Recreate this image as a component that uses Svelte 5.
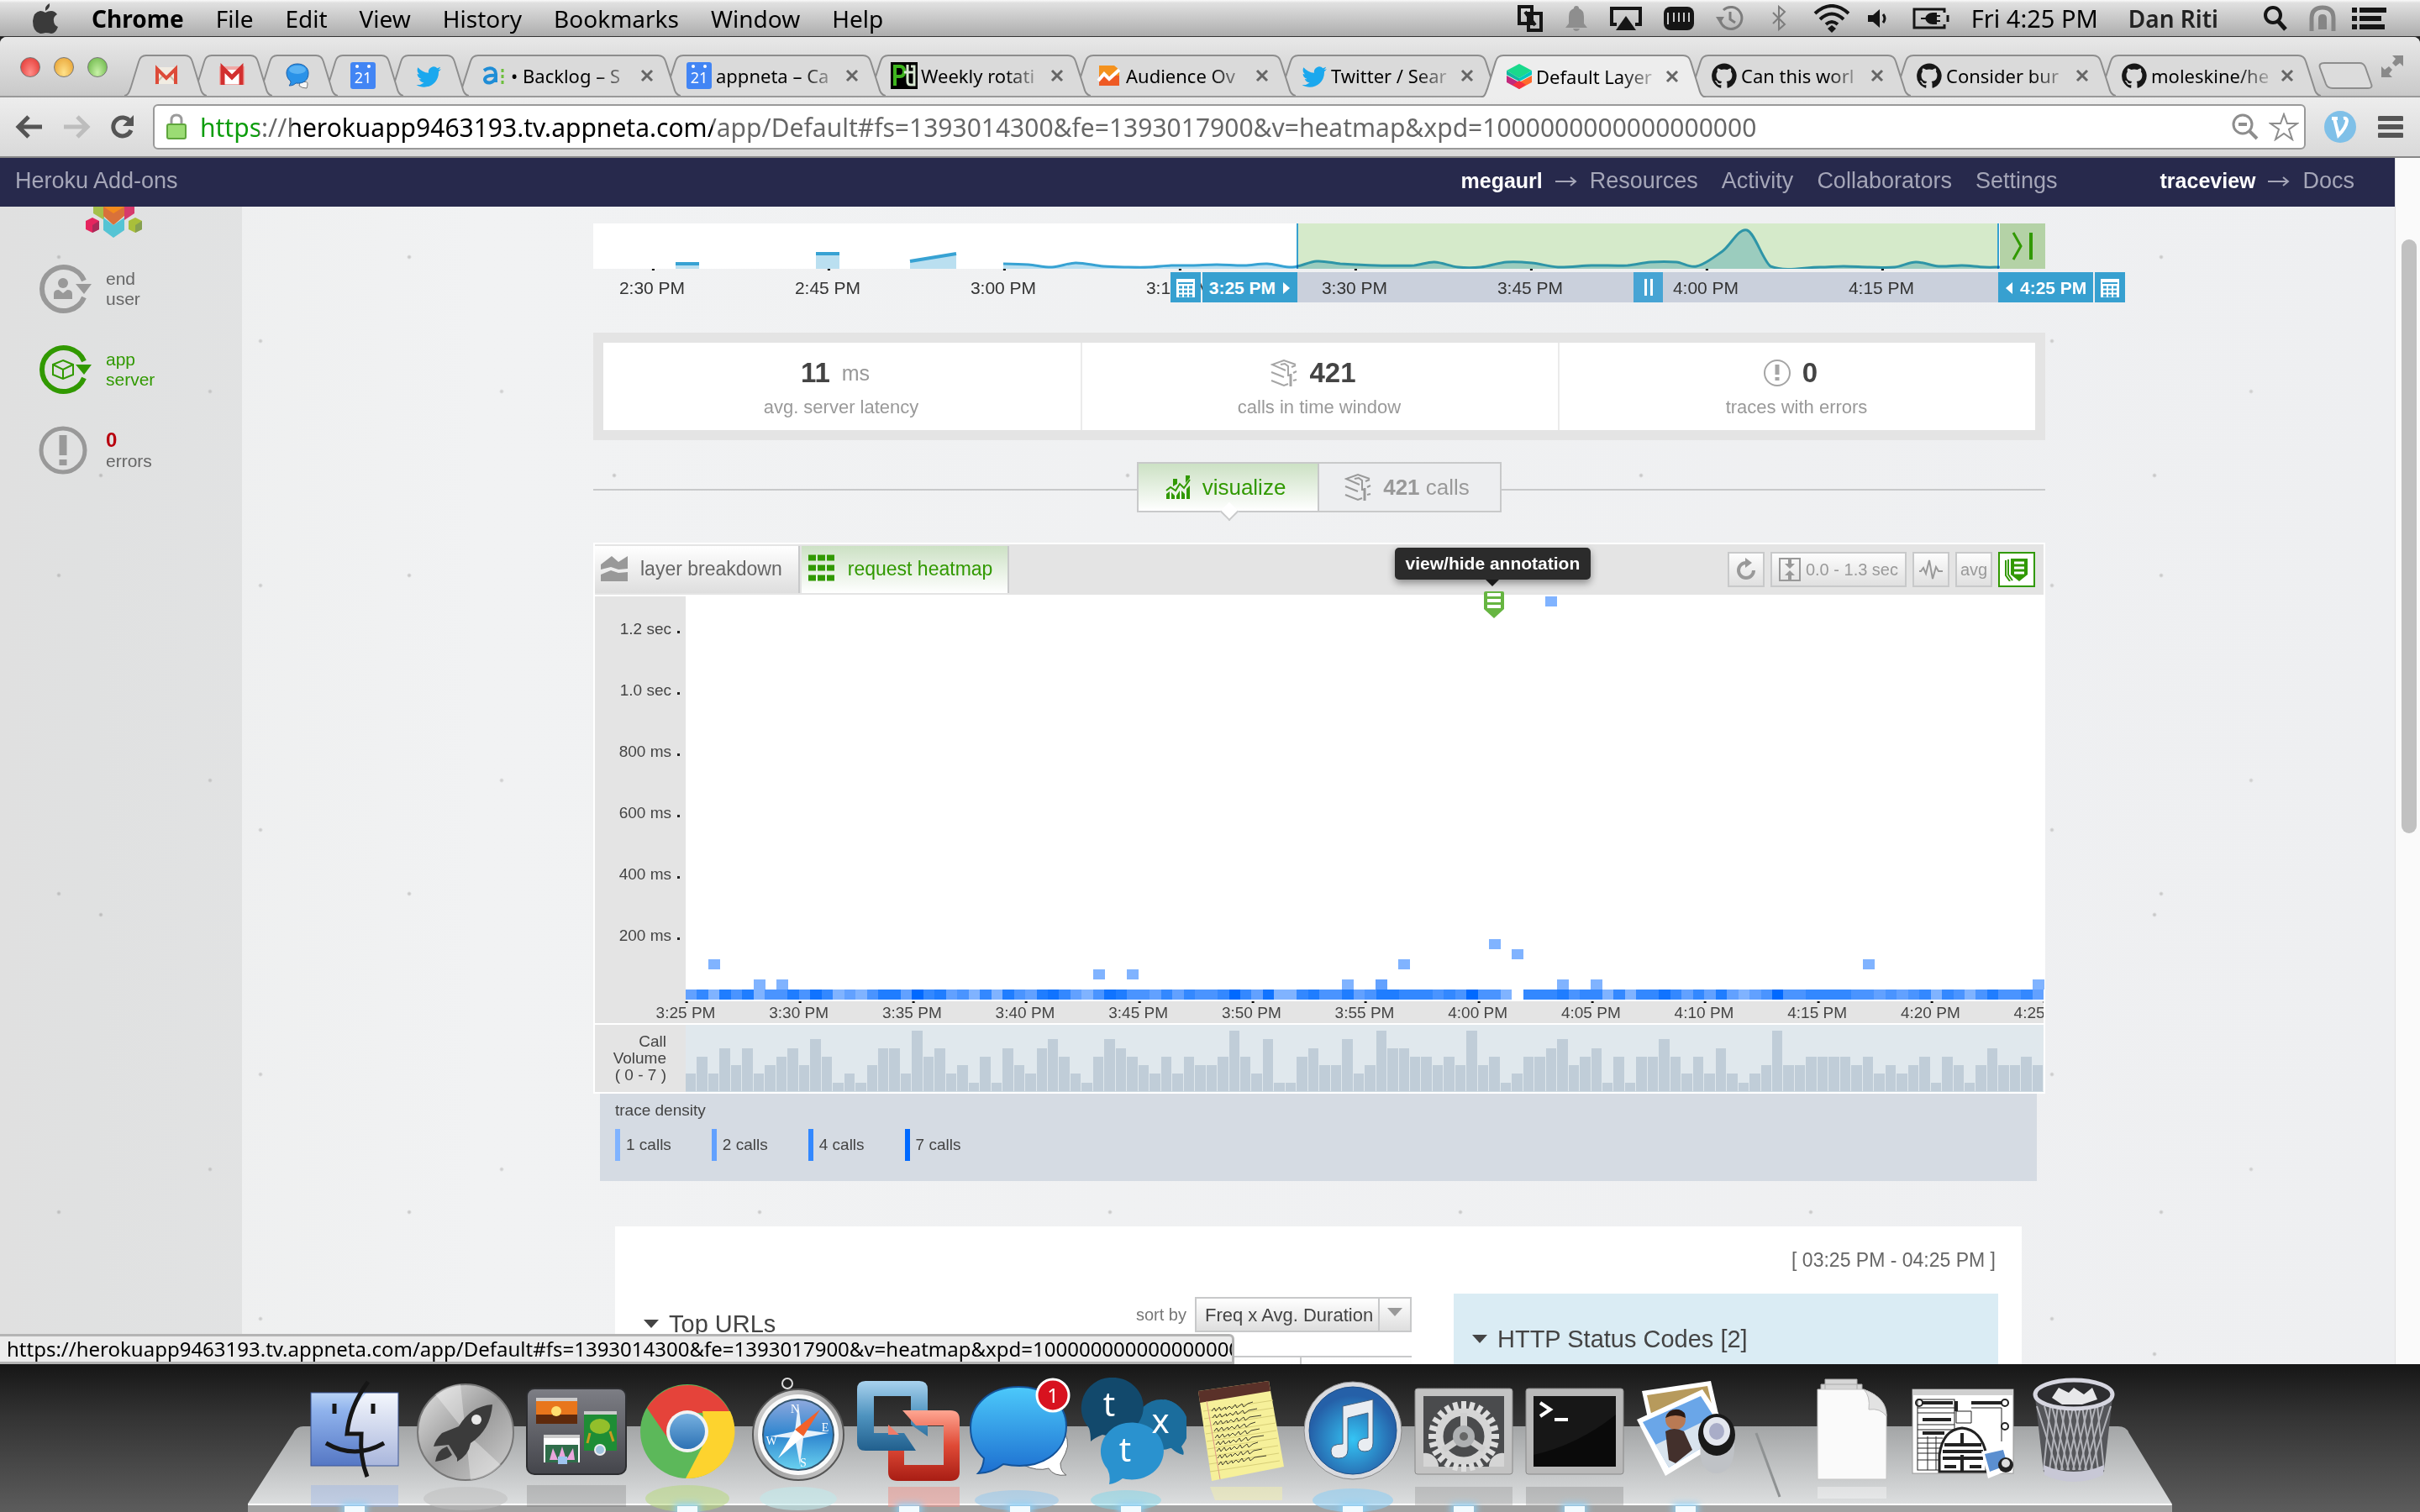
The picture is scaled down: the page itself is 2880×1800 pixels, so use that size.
<script>
  const menus = ['File', 'Edit', 'View', 'History', 'Bookmarks', 'Window', 'Help'];

  const miniTabs = ['gmail', 'inbox', 'chat', 'cal', 'twitter'];
  const tabs = [
    { icon: 'asana', title: '• Backlog – S' },
    { icon: 'cal', title: 'appneta – Ca' },
    { icon: 'pd', title: 'Weekly rotati' },
    { icon: 'analytics', title: 'Audience Ov' },
    { icon: 'twitter', title: 'Twitter / Sear' },
    { icon: 'layer', title: 'Default Layer', active: true },
    { icon: 'github', title: 'Can this worl' },
    { icon: 'github', title: 'Consider bur' },
    { icon: 'github', title: 'moleskine/he' }
  ];

  const url = 'https://herokuapp9463193.tv.appneta.com/app/Default#fs=1393014300&fe=1393017900&v=heatmap&xpd=1000000000000000000';

  // tick positions as a share of the overview chart's width
  const timeTicks = ['2:30 PM', '2:45 PM', '3:00 PM', '3:15 PM', '3:30 PM', '3:45 PM', '4:00 PM', '4:15 PM']
    .map((label, i) => ({ label, left: (70 + i * 209) / 17.28 }));

  const latency = [
    [488, 48], [518, 49], [546, 52], [574, 47], [607, 51], [637, 52], [661, 52], [688, 50], [712, 50], [742, 49],
    [775, 50], [802, 48], [832, 52], [861, 45], [889, 48], [931, 50], [977, 50], [1001, 46], [1029, 52], [1056, 52],
    [1087, 46], [1117, 47], [1148, 52], [1188, 50], [1231, 50], [1258, 46], [1289, 46], [1313, 51], [1344, 33],
    [1373, 8], [1401, 51], [1460, 52], [1488, 51], [1519, 52], [1549, 52], [1574, 46], [1601, 51], [1629, 50],
    [1656, 52], [1674, 52]
  ];
  function smooth(points) {
    let d = `M${points[0][0]} ${points[0][1]}`;
    for (let i = 1; i < points.length; i++) {
      const [x0, y0] = points[i - 1];
      const [x1, y1] = points[i];
      const before = points[i - 2] ?? points[i - 1];
      const after = points[i + 1] ?? points[i];
      const dx = (x1 - x0) / 3;
      const s0 = (y1 - before[1]) / 6;
      const s1 = (after[1] - y0) / 6;
      d += ` C${x0 + dx} ${y0 + s0} ${x1 - dx} ${y1 - s1} ${x1} ${y1}`;
    }
    return d;
  }
  const latencyLine = smooth(latency);

  // calls per 30 second bucket
  const counts = [
    2, 4, 2, 5, 3, 5, 2, 3, 4, 5, 3, 6, 4, 1, 2, 1, 3, 5, 5, 2, 7, 4, 5, 2, 3, 1, 4, 1, 5, 3,
    2, 5, 6, 4, 2, 1, 4, 6, 5, 4, 3, 2, 4, 2, 4, 3, 3, 4, 7, 4, 2, 6, 1, 1, 4, 5, 3, 3, 6, 2,
    3, 7, 5, 5, 4, 4, 3, 4, 3, 7, 3, 4, 1, 2, 4, 4, 5, 6, 3, 4, 5, 1, 4, 1, 4, 4, 6, 4, 2, 4,
    2, 5, 2, 1, 2, 3, 7, 3, 3, 4, 4, 4, 4, 3, 4, 2, 3, 2, 3, 4, 1, 4, 3, 1, 3, 5, 3, 3, 4, 3
  ];
  // calls that fell outside the lowest latency row
  const outliers = [
    { i: 2, row: 3 }, { i: 6, row: 1 }, { i: 8, row: 1 }, { i: 36, row: 2 }, { i: 39, row: 2 }, { i: 58, row: 1 },
    { i: 61, row: 1, n: 2 }, { i: 63, row: 3 }, { i: 71, row: 5 }, { i: 73, row: 4, n: 1, all: true },
    { i: 76, row: 39 }, { i: 77, row: 1 }, { i: 80, row: 1 }, { i: 104, row: 3 }, { i: 119, row: 1 }
  ];
  const shades = ['', '#80b3ff', '#62a1ff', '#4a94ff', '#3388ff', '#1f7dff', '#1073ff', '#0069ff'];
  const band = counts.map((n, i) => {
    const out = outliers.find((o) => o.i === i);
    if (!out) return n;
    return out.all ? 0 : Math.max(1, n - (out.n ?? 1));
  });

  const latencyTicks = ['1.2 sec', '1.0 sec', '800 ms', '600 ms', '400 ms', '200 ms'];
  const hourTicks = ['3:25', '3:30', '3:35', '3:40', '3:45', '3:50', '3:55', '4:00', '4:05', '4:10', '4:15', '4:20', '4:25'];
  const legend = [1, 2, 4, 7];

  const dockApps = [
    { id: 'finder', on: true }, { id: 'launchpad' }, { id: 'mission' }, { id: 'chrome', on: true }, { id: 'safari' },
    { id: 'vmware', on: true }, { id: 'messages', on: true }, { id: 'textual', on: true }, { id: 'notes' },
    { id: 'itunes', on: true }, { id: 'prefs', on: true }, { id: 'terminal', on: true }, { id: 'preview', on: true },
    { id: 'sep' }, { id: 'docs' }, { id: 'window' }, { id: 'trash' }
  ];
  const teeth = Array.from({ length: 24 }, (_, i) => i * 15);
  const lines = Array.from({ length: 9 }, (_, i) => i);
</script>

{#snippet fav(name)}
  <svg class="fav" viewBox="0 0 32 32" aria-hidden="true">
    {#if name === 'gmail'}
      <rect x="3" y="6" width="26" height="20" fill="#f1ece2" />
      <path d="M3 26L13 15M29 26L19 15" stroke="#c9c0ad" stroke-width="2" />
      <path d="M5 26V8L16 19L27 8V26" fill="none" stroke="#dd4b39" stroke-width="4" />
    {:else if name === 'inbox'}
      <rect x="1" y="5" width="30" height="22" fill="#f0a9a6" />
      <rect x="7" y="9" width="18" height="17" fill="#fff" />
      <path d="M5 27V7L16 18L27 7V27" fill="none" stroke="#d2302f" stroke-width="5" />
    {:else if name === 'chat'}
      <path d="M19 24q10-2 9 2q0 2-1 5q-6 0-9-3z" fill="#f6f6f6" stroke="#777" />
      <path d="M16 2C8 2 3 7 3 13c0 5 3 8 5 10c0 2-1 4-2 5c4 0 6-1 8-3c10 1 15-4 15-12C29 7 24 2 16 2z" fill="#2a92e8" stroke="#1c5fa8" />
      <ellipse cx="16" cy="9" rx="10" ry="5" fill="#7cc8fa" opacity=".6" />
    {:else if name === 'cal'}
      <rect x="1" y="0" width="30" height="32" rx="3" fill="#4285f4" />
      <circle cx="9" cy="5" r="2" fill="#fff" /><circle cx="23" cy="5" r="2" fill="#fff" />
      <text x="16" y="25" text-anchor="middle" font-size="18" fill="#fff" font-family="Noto Sans, sans-serif">21</text>
    {:else if name === 'twitter'}
      <path d="M31 8c-1 .6-2 .9-3.400 1c1.200-.8 2-2 2.500-3.200c-1.200.7-2.400 1.100-3.700 1.400A6.200 6.200 0 0 0 16 12.800C11 12.500 6.500 10 3.400 6.300c-1.600 3-.7 6.300 1.900 8.200c-1 0-2-.3-2.700-.7c0 3 2 5.500 4.900 6.200c-.9.200-1.800.3-2.700.1c.8 2.500 3 4.200 5.700 4.300A12.500 12.500 0 0 1 1.500 27C13 34 28.500 26.500 28 11.200C29.200 10.300 30.200 9.200 31 8z" fill="#1ba8ee" />
    {:else if name === 'asana'}
      <path d="M4 10q7-5 12-1q2 2 2 5v10M18 16q-13-1-13 5q1 4 6 3.500q5-1 7-6" fill="none" stroke="#1f8dd6" stroke-width="4" />
      <path d="M26 8v4M26 15v4M26 22v4" stroke="#6cbf3c" stroke-width="3" />
    {:else if name === 'pd'}
      <rect width="32" height="32" fill="#000" />
      <path d="M5 28V5h6q5 0 5 6t-5 6H7" fill="none" stroke="#3fb51f" stroke-width="4" />
      <path d="M20 3v20q0 4 4 4h4V5h-4M16 12h12" fill="none" stroke="#d8e8d2" stroke-width="3" />
    {:else if name === 'analytics'}
      <path d="M4 4h18l6 5v19H4z" fill="#f4921e" /><path d="M4 16h24v12H4z" fill="#ee5a24" />
      <path d="M3 22L10 14L16 20L28 9" fill="none" stroke="#fff" stroke-width="4" />
    {:else if name === 'layer'}
      <path d="M16 1L31 9L16 18L1 9z" fill="#19d98c" /><path d="M1 9L16 18V22L1 14z" fill="#10b8a0" /><path d="M31 9L16 18V22L31 14z" fill="#00c8c0" />
      <path d="M1 15L16 23V31L1 23z" fill="#c22a7c" /><path d="M31 15L16 23V31L31 23z" fill="#ff6a2b" /><path d="M16 21L24 26L16 31L8 26z" fill="#f5313f" />
    {:else if name === 'github'}
      <path d="M16 1.500A15 15 0 0 0 11.300 30.700c.8.100 1-.3 1-.7v-3c-4 .9-5-1.800-5-1.800c-.7-1.700-1.700-2.200-1.700-2.200c-1.300-.9.100-.9.100-.9c1.500.1 2.300 1.600 2.300 1.600c1.300 2.300 3.500 1.600 4.300 1.200c.1-1 .5-1.600 1-2C9.900 22.500 6.500 21.300 6.500 15.500c0-1.600.6-3 1.500-4c-.2-.4-.7-2 .1-4c0 0 1.300-.4 4.100 1.500a14 14 0 0 1 7.500 0c2.800-1.900 4.100-1.500 4.100-1.500c.8 2 .3 3.600.1 4c1 1 1.500 2.400 1.500 4c0 5.800-3.500 7-6.900 7.400c.6.500 1 1.400 1 2.800V30c0 .4.300.9 1 .7A15 15 0 0 0 16 1.500z" fill="#171717" />
    {/if}
  </svg>
{/snippet}

{#snippet callsIcon()}
  <svg class="calls-icon" viewBox="0 0 32 34" aria-hidden="true">
    <g fill="none" stroke="currentColor" stroke-width="2">
      <path d="M30 7L16 2L2 7L18 14M12 7L17 6L21 9V20H25M30 8L25 10" />
      <path d="M1 16L16 22M1 26L16 32L21 30" />
      <path d="M24 18V33" stroke-width="3" />
      <path d="M27 17L31 15M27 26L31 25" />
    </g>
  </svg>
{/snippet}

{#snippet calendarIcon()}
  <svg width="24" height="24" viewBox="0 0 24 24" aria-hidden="true">
    <rect x="1" y="1" width="22" height="22" fill="#fff" />
    <path d="M3 6h18" stroke="#37a0d0" stroke-width="2" />
    <path d="M4 11h16M4 16h16M4 21h16" stroke="#37a0d0" stroke-width="3" stroke-dasharray="4 2" />
  </svg>
{/snippet}

{#snippet dockIcon(id)}
  <svg viewBox="0 0 132 160" aria-hidden="true">
    {#if id === 'finder'}
      <rect x="14" y="18" width="104" height="87" fill="url(#finderL)" />
      <path d="M80 18h38v87H76Q73 88 74 70H56Q58 40 80 18z" fill="url(#finderR)" />
      <rect x="14" y="18" width="104" height="87" fill="none" stroke="#3d5796" />
      <path d="M82 5Q60 35 57 67H74Q72 95 81 118M32 78Q66 98 101 78" fill="none" stroke="#161616" stroke-width="5" />
      <path d="M42 31v12M88 31v12" stroke="#161616" stroke-width="5" />
      <rect x="14" y="128" width="104" height="26" fill="#8fb0ea" opacity=".35" />
    {:else if id === 'launchpad'}
      <circle cx="66" cy="65" r="57" fill="url(#steel)" stroke="#777" stroke-width="2" />
      <path d="M66 65L30 20A57 57 0 0 1 60 8zM66 65L108 104A57 57 0 0 1 72 122z" fill="#fff" opacity=".35" />
      <path d="M98 32Q72 34 58 58L38 66Q30 74 28 82L46 80L56 96L56 100Q70 92 72 78Q96 62 98 32z" fill="#3b3b3b" />
      <path d="M44 82Q32 86 30 100Q44 98 50 92z" fill="#3b3b3b" /><circle cx="79" cy="50" r="6" fill="#e8e8e8" />
      <ellipse cx="66" cy="144" rx="50" ry="14" fill="#bbb" opacity=".5" />
    {:else if id === 'mission'}
      <rect x="7" y="13" width="118" height="102" rx="9" fill="url(#slate)" stroke="#2c2d30" stroke-width="2" />
      <rect x="18" y="24" width="49" height="31" fill="#e8761c" /><rect x="18" y="24" width="49" height="4" fill="#ccc" /><path d="M18 44h49v11H18z" fill="#5f2a0c" /><circle cx="42" cy="40" r="6" fill="#ffdf70" />
      <rect x="75" y="40" width="39" height="47" fill="#1e8d35" /><rect x="75" y="40" width="39" height="4" fill="#ccc" /><ellipse cx="94" cy="58" rx="12" ry="9" fill="#93bf2b" /><path d="M82 66L79 78M106 64L110 76" stroke="#c79b22" stroke-width="3" />
      <rect x="27" y="68" width="43" height="33" fill="#fff" /><rect x="27" y="68" width="43" height="4" fill="#ccc" /><rect x="29" y="80" width="39" height="21" fill="#2f6d4a" /><path d="M34 98L38 84L44 98L49 82L54 98L62 84L64 98z" fill="#e9a7dc" />
      <circle cx="94" cy="86" r="6" fill="#9fc4df" stroke="#eee" stroke-width="2" /><rect x="44" y="94" width="11" height="9" fill="#9fc4ef" />
      <rect x="7" y="128" width="118" height="26" fill="#777" opacity=".3" />
    {:else if id === 'chrome'}
      <circle cx="66" cy="64" r="56" fill="#5cb85a" />
      <path d="M18 36A56 56 0 0 1 117 42H66L44 74z" fill="#e5433a" />
      <path d="M117 40A56 56 0 0 1 64 120L88 74L84 40z" fill="#fdd32e" />
      <circle cx="66" cy="64" r="25" fill="#f3f3f3" /><circle cx="66" cy="64" r="21" fill="url(#blueBall)" />
      <ellipse cx="66" cy="144" rx="50" ry="16" fill="#b7d77d" opacity=".55" />
    {:else if id === 'safari'}
      <circle cx="53" cy="7" r="6" fill="none" stroke="#ddd" stroke-width="2" />
      <circle cx="66" cy="68" r="54" fill="url(#steel)" stroke="#555" stroke-width="2" /><circle cx="66" cy="68" r="48" fill="#fafafa" /><circle cx="66" cy="68" r="42" fill="url(#ocean)" stroke="#35566f" stroke-width="2" />
      <path d="M66 32L70 62L102 66L72 72L68 104L62 72L32 70L62 64z" fill="#e6f1fb" />
      <path d="M92 38L72 70L62 62z" fill="#f2612a" /><path d="M42 96L62 62L72 70z" fill="#fff" />
      <g font-family="Liberation Serif, serif" font-size="14" fill="#fff" text-anchor="middle"><text x="62" y="42">N</text><text x="72" y="106">S</text><text x="98" y="64">E</text><text x="34" y="80">W</text></g>
      <ellipse cx="66" cy="144" rx="46" ry="14" fill="#bfe8ea" opacity=".6" />
    {:else if id === 'vmware'}
      <path d="M14 4H78Q88 4 88 14V70L68 56V22H24V66H60L74 87H14Q4 87 4 77V14Q4 4 14 4z" fill="url(#vmBlue)" />
      <path d="M58 39H115Q126 39 126 50V112Q126 123 115 123H52Q41 123 41 112V87H60V104H107V57H74z" fill="url(#vmRed)" /><path d="M41 68V56L54 68z" fill="#f07c69" />
      <rect x="41" y="130" width="85" height="24" fill="#e98e86" opacity=".5" />
    {:else if id === 'messages'}
      <path d="M112 56Q128 74 120 90Q116 98 114 102Q114 112 121 116Q106 118 100 108Q86 112 70 104z" fill="#fff" stroke="#666" />
      <path d="M64 11C30 11 7 32 7 60C7 76 14 88 23 96Q22 108 16 114Q32 114 46 103C92 112 121 88 121 58C121 32 98 11 64 11z" fill="url(#msg)" stroke="#13539a" stroke-width="2" />
      <circle cx="105" cy="21" r="19" fill="#d8121f" stroke="#fff" stroke-width="3" />
      <text x="105" y="30" text-anchor="middle" font-size="24" fill="#fff" font-family="Noto Sans, sans-serif">1</text>
      <ellipse cx="62" cy="146" rx="50" ry="12" fill="#8fc5ee" opacity=".5" />
    {:else if id === 'textual'}
      <path d="M106 26a34 34 0 0 1 20 56q4 8 2 10q-8-2-14-8A34 34 0 0 1 106 26z" fill="#1b6d9d" /><circle cx="102" cy="56" r="30" fill="#1b6d9d" />
      <path d="M40 0a37 35 0 1 1-8 68q-10 4-14 8q0-10-2-16A36 36 0 0 1 40 0z" fill="#12496c" />
      <path d="M60 54a38 34 0 1 1-4 66q-8 6-16 7q2-10-2-18A36 34 0 0 1 60 54z" fill="#2a92cf" />
      <g fill="#fff" font-family="Noto Sans, sans-serif" font-size="40" text-anchor="middle"><text x="40" y="46">t</text><text x="101" y="66">x</text><text x="59" y="100">t</text></g>
      <ellipse cx="60" cy="146" rx="42" ry="12" fill="#7fd6ea" opacity=".5" />
    {:else if id === 'notes'}
      <path d="M14 16L98 4L116 106L30 123z" fill="#f6f09a" /><path d="M14 16L98 4L100 16L16 30z" fill="#5a3129" />
      <g stroke="#d8cf78" fill="none">
        {#each lines as n}
          <path d={`M${20 + n} ${40 + n * 9}L${103 + n} ${27 + n * 9}`} />
        {/each}
      </g>
      <g stroke="#3f3d2c" fill="none">
        {#each lines as n}
          <path d={`M${30 + n} ${40 + n * 8}l3-4l2 4l4-5l2 4l5-4l1 3l4-4l3 3l4-5l2 4l6-5l2 4l5-4l${6 + (n % 3) * 4}-2`} />
        {/each}
      </g>
      <path d="M24 28L40 121" stroke="#e09a86" /><path d="M28 130h86v16H34z" fill="#f3efae" opacity=".5" />
    {:else if id === 'itunes'}
      <circle cx="66" cy="63" r="58" fill="#d9dade" stroke="#888" /><circle cx="66" cy="63" r="52" fill="url(#tunes)" stroke="#1d4e86" />
      <path d="M54 34L90 26V78Q90 88 80 88Q72 88 72 80Q72 72 84 72V42L60 48V86Q60 96 49 96Q40 96 40 87Q40 79 54 79z" fill="#e9edf2" stroke="#47637f" />
      <ellipse cx="66" cy="146" rx="48" ry="14" fill="#8fcdf2" opacity=".6" />
    {:else if id === 'prefs'}
      <rect x="8" y="13" width="116" height="102" rx="3" fill="#c3c3c3" stroke="#888" /><rect x="18" y="22" width="96" height="84" fill="#4a4b4d" />
      {#each teeth as a}
        <rect x="63" y="28" width="6" height="12" fill="#dedede" transform={`rotate(${a} 66 70)`} />
      {/each}
      <circle cx="66" cy="70" r="29" fill="none" stroke="#d5d5d5" stroke-width="9" /><path d="M66 70V42M66 70L42 86M66 70L90 86" stroke="#cfcfcf" stroke-width="8" /><circle cx="66" cy="70" r="13" fill="#aeb0b2" /><circle cx="66" cy="70" r="5" fill="#666" />
      <path d="M18 90a16 16 0 0 1 18 16H18zM114 90a16 16 0 0 0-18 16H114z" fill="#d5d5d5" /><rect x="8" y="130" width="116" height="22" fill="#888" opacity=".3" />
    {:else if id === 'terminal'}
      <rect x="8" y="13" width="116" height="102" rx="3" fill="#b9b9b9" stroke="#888" /><rect x="17" y="22" width="98" height="84" fill="#171717" /><path d="M17 92Q70 80 115 44V106H17z" fill="#050505" opacity=".7" />
      <path d="M25 30L37 38L25 46M42 50h16" fill="none" stroke="#fff" stroke-width="4" /><rect x="8" y="130" width="116" height="22" fill="#777" opacity=".3" />
    {:else if id === 'preview'}
      <path d="M14 16L96 4L112 74L30 90z" fill="#fff" /><path d="M20 21L92 10L106 70L34 82z" fill="#b79a5c" />
      <path d="M8 50L86 14L122 68L42 117z" fill="#fff" /><path d="M15 53L84 22L113 67L46 107z" fill="#6aa6e8" /><path d="M30 80L100 46L113 67L46 107z" fill="#d9e4ee" />
      <circle cx="54" cy="50" r="12" fill="#b97a54" /><path d="M42 48q4-12 16-10q8 2 8 10q-12-6-24 0z" fill="#2a1a14" /><path d="M42 64q10-6 22 0l10 22l-20 16l-8-4z" fill="#43302c" />
      <path d="M84 76Q80 114 104 114Q126 112 124 74z" fill="#bfc2c6" /><ellipse cx="103" cy="68" rx="22" ry="25" fill="#191919" /><ellipse cx="103" cy="64" rx="16" ry="17" fill="#e3e6ee" /><ellipse cx="103" cy="64" rx="9" ry="10" fill="#a9adc8" />
    {:else if id === 'docs'}
      <path d="M34 2H72V20H34zM29 8H78V24H29z" fill="#d6d6d6" stroke="#aaa" /><path d="M25 14H80Q104 22 107 44V121H25z" fill="#fafafa" stroke="#c4c4c4" /><path d="M80 14Q88 22 86 38Q100 36 107 46Q108 24 80 14z" fill="#e2e2e2" stroke="#bbb" />
      <path d="M25 130h82v14H25z" fill="#fff" opacity=".35" />
    {:else if id === 'window'}
      <rect x="6" y="14" width="120" height="100" fill="#fff" stroke="#999" /><rect x="6" y="14" width="120" height="7" fill="#cfcfcf" />
      <path d="M18 30h36M76 30h36M18 50h34M18 66h26M58 28v12" stroke="#222" stroke-width="4" />
      <g fill="none" stroke="#222"><rect x="12" y="26" width="44" height="84" /><path d="M12 36h44M12 42h44M12 56h44M12 62h44M12 72h30M12 78h30M12 84h30M12 90h30M12 98h30M24 70v40M34 70v40M76 36h36v40M58 40h18v14H58z" /></g>
      <path d="M38 112V92Q42 62 65 60Q88 62 94 92V112z" fill="#fff" stroke="#222" stroke-width="3" /><path d="M44 80h44M42 88h48M42 96h48M44 106h14M74 106h14M65 66v12M65 92v20" stroke="#222" stroke-width="4" />
      <circle cx="14" cy="30" r="4" fill="none" stroke="#222" stroke-width="2" /><circle cx="116" cy="30" r="4" fill="none" stroke="#222" stroke-width="2" /><circle cx="116" cy="58" r="4" fill="none" stroke="#222" stroke-width="2" />
      <path d="M88 88L118 82L126 108L96 120z" fill="#fff" /><path d="M92 91L114 86L119 104L98 112z" fill="#5b8fd0" /><circle cx="117" cy="104" r="9" fill="#222" /><circle cx="117" cy="102" r="5" fill="#ddd" />
    {:else if id === 'trash'}
      <path d="M20 24L30 112Q66 132 102 112L112 24z" fill="#55565a" />
      <g stroke="#c9cad0" stroke-width="2" fill="none" opacity=".8">
        {#each lines as n}
          <path d={`M${22 + n * 9} 34L${46 + n * 7} 110M${110 - n * 9} 34L${86 - n * 7} 110`} />
        {/each}
      </g>
      <path d="M30 104Q66 120 102 104L101 116Q66 132 31 116z" fill="#c8c8d6" />
      <ellipse cx="66" cy="20" rx="46" ry="17" fill="#2d2d30" stroke="#d6d6e0" stroke-width="5" /><path d="M40 24L48 12L60 18L66 12L78 20L88 12L94 26L76 32H52z" fill="#e8e8ea" />
    {/if}
  </svg>
{/snippet}

<svg class="defs" width="0" height="0" aria-hidden="true">
  <defs>
    <linearGradient id="finderL" x2="0" y2="1"><stop offset="0" stop-color="#b9d3f6" /><stop offset=".25" stop-color="#8fb2ec" /><stop offset="1" stop-color="#5577c4" /></linearGradient>
    <linearGradient id="finderR" x2="0" y2="1"><stop offset="0" stop-color="#f4f7fd" /><stop offset="1" stop-color="#a9b6dc" /></linearGradient>
    <linearGradient id="steel" x2="1" y2="1"><stop offset="0" stop-color="#e6e6e6" /><stop offset=".5" stop-color="#9a9a9a" /><stop offset="1" stop-color="#d2d2d2" /></linearGradient>
    <linearGradient id="slate" x2="0" y2="1"><stop offset="0" stop-color="#7d7e85" /><stop offset="1" stop-color="#44454b" /></linearGradient>
    <linearGradient id="blueBall" x2="0" y2="1"><stop offset="0" stop-color="#76b0e0" /><stop offset="1" stop-color="#2d72b4" /></linearGradient>
    <linearGradient id="ocean" x2="0" y2="1"><stop offset="0" stop-color="#8fa9de" /><stop offset=".5" stop-color="#2f86cf" /><stop offset="1" stop-color="#6ad2f0" /></linearGradient>
    <linearGradient id="vmBlue" x2="0" y2="1"><stop offset="0" stop-color="#a9d2ee" /><stop offset=".5" stop-color="#4e93bf" /><stop offset="1" stop-color="#215f8d" /></linearGradient>
    <linearGradient id="vmRed" x2="0" y2="1"><stop offset="0" stop-color="#ffa692" /><stop offset=".5" stop-color="#df4a36" /><stop offset="1" stop-color="#a81d14" /></linearGradient>
    <linearGradient id="msg" x2="0" y2="1"><stop offset="0" stop-color="#4cc9fb" /><stop offset="1" stop-color="#1d6fd0" /></linearGradient>
    <radialGradient id="tunes" cy=".6"><stop offset="0" stop-color="#35c4f4" /><stop offset="1" stop-color="#2560a8" /></radialGradient>
  </defs>
</svg>

<div class="desktop">
  <header class="menubar">
    <svg class="apple" width="32" height="38" viewBox="0 0 32 38" aria-hidden="true">
      <path d="M21 1q1 6-5 9q-1-6 5-9zM16 12q3-2 7-2q4 0 7 4q-5 3-4 8q0 5 5 7q-3 8-8 8q-3-1-7-1q-3 1-6 1Q1 35 1 22q1-11 9-12q3 0 6 2z" fill="#3a3a3a" />
    </svg>
    <nav class="menus">
      <button class="strong">Chrome</button>
      {#each menus as m}<button>{m}</button>{/each}
    </nav>
    <div class="status">
      <svg width="30" height="32" viewBox="0 0 30 32"><path d="M2 2h15v20H2zM13 10h15v20H13z" fill="none" stroke="#151515" stroke-width="4" /><path d="M9 8L21 24" stroke="#151515" stroke-width="4" /></svg>
      <svg width="28" height="32" viewBox="0 0 28 32"><path d="M14 1q3 0 3 3q6 2 6 10v8l4 5H1l4-5V14q0-8 6-10q0-3 3-3zM10 28h8q-1 3-4 3t-4-3z" fill="#8e8e8e" /></svg>
      <svg width="38" height="30" viewBox="0 0 38 30"><path d="M8 22H2V3h34v19h-6" fill="none" stroke="#151515" stroke-width="4" /><path d="M19 12L31 29H7z" fill="#151515" /></svg>
      <svg width="36" height="28" viewBox="0 0 36 28"><rect width="36" height="28" rx="8" fill="#151515" /><path d="M5 7v14M12 7v11M18 7v11M24 7v11M30 7v11" stroke="#c8c8c8" stroke-width="2" /></svg>
      <svg width="34" height="32" viewBox="0 0 34 32"><path d="M5 17A13 13 0 1 0 9 6M17 8v9l6 4" fill="none" stroke="#7d7d7d" stroke-width="3" /><path d="M0 14h10l-5 8z" fill="#7d7d7d" /></svg>
      <svg width="30" height="32" viewBox="0 0 30 32"><path d="M8 9L22 23L15 29V2L22 8L8 22" fill="none" stroke="#7d7d7d" stroke-width="2" /></svg>
      <svg width="44" height="34" viewBox="0 0 44 34"><path d="M2 11Q22-7 42 11M8 18Q22 5 36 18M15 24Q22 18 29 24" fill="none" stroke="#151515" stroke-width="4" /><path d="M22 25l5 4l-5 5l-5-5z" fill="#151515" /></svg>
      <svg class="volume-icon" width="28" height="24" viewBox="0 0 28 24"><path d="M1 8h6l8-7v22l-8-7H1z" fill="#151515" /><path d="M19 7q4 5 0 10" fill="none" stroke="#151515" stroke-width="3" /></svg>
      <svg width="44" height="26" viewBox="0 0 44 26"><path d="M38 6V2H2v22h36v-4M42 9v8" fill="none" stroke="#151515" stroke-width="3" /><path d="M10 13h6q2-6 8-6h4v12h-4q-6 0-8-6M28 10h5M28 16h5" fill="#151515" stroke="#151515" stroke-width="2" /></svg>
      <span class="clock">Fri 4:25 PM</span>
      <span class="user">Dan Riti</span>
      <svg width="28" height="30" viewBox="0 0 28 30"><circle cx="11" cy="11" r="9" fill="none" stroke="#151515" stroke-width="4" /><path d="M17 18L26 28" stroke="#151515" stroke-width="5" /></svg>
      <svg class="arch" width="32" height="32" viewBox="0 0 32 32"><path d="M3 31V16Q3 3 16 3T29 16V31" fill="none" stroke="#858585" stroke-width="5" /><path d="M11 29V16q0-5 5-5t5 5v13z" fill="#858585" /></svg>
      <svg width="42" height="28" viewBox="0 0 42 28"><path d="M1 4h6M10 4h32M1 14h6M10 14h26M1 24h6M10 24h30" stroke="#151515" stroke-width="6" /></svg>
    </div>
  </header>

  <section class="window">
    <div class="tabstrip">
      <div class="lights"><i class="red"></i><i class="amber"></i><i class="green"></i></div>
      <div class="minis">
        {#each miniTabs as name, i}
          <button class="tab mini" aria-label={name} style:z-index={20 - i}>
            <svg class="shape" viewBox="0 0 102 50" preserveAspectRatio="none"><path d="M0 50C6 49 6 44 8 40L18 8Q20 1 27 1H75Q82 1 84 8L94 40Q96 49 102 50" fill="#dadada" stroke="#8d8d8d" stroke-width="2" /></svg>
            {@render fav(name)}
          </button>
        {/each}
      </div>
      <div class="tabs" role="tablist">
        {#each tabs as t, i}
          <div class="tab big" class:active={t.active} style:z-index={t.active ? 30 : 14 - i}>
            <svg class="shape" viewBox="0 0 268 50" preserveAspectRatio="none"><path d="M0 50C6 49 6 44 8 40L18 8Q20 1 27 1H241Q248 1 250 8L260 40Q262 49 268 50" fill={t.active ? '#ededed' : '#dadada'} stroke="#8d8d8d" stroke-width="2" /></svg>
            {@render fav(t.icon)}
            <button class="title" role="tab" aria-selected={!!t.active}>{t.title}</button>
            <button class="close" aria-label="Close tab"><svg width="16" height="16" viewBox="0 0 16 16"><path d="M2 2L14 14M14 2L2 14" stroke="#666" stroke-width="3" /></svg></button>
          </div>
        {/each}
        <button class="newtab" aria-label="New tab"><svg width="66" height="34" viewBox="0 0 66 34"><path d="M8 2H50Q55 2 57 7L64 27Q66 32 60 32H18Q12 32 10 27L3 8Q1 2 8 2z" fill="#dcdcdc" stroke="#8d8d8d" stroke-width="2" /></svg></button>
      </div>
      <svg class="full" width="30" height="30" viewBox="0 0 30 30"><path d="M28 2v13l-4-4l-5 4l-4-4l4-5l-4-4zM2 28V15l4 4l5-4l4 4l-4 5l4 4z" fill="#8a8a8a" /></svg>
    </div>

    <div class="toolbar">
      <button aria-label="Back"><svg width="34" height="28" viewBox="0 0 34 28"><path d="M16 2L4 14L16 26M4 14H32" fill="none" stroke="#555" stroke-width="5" /></svg></button>
      <button aria-label="Forward"><svg width="34" height="28" viewBox="0 0 34 28"><path d="M18 2L30 14L18 26M30 14H2" fill="none" stroke="#bdbdbd" stroke-width="5" /></svg></button>
      <button aria-label="Reload"><svg width="30" height="30" viewBox="0 0 30 30"><path d="M25 9A11 11 0 1 0 26 19" fill="none" stroke="#555" stroke-width="5" /><path d="M29 1V14H16z" fill="#555" /></svg></button>
      <label class="omnibox">
        <svg width="24" height="32" viewBox="0 0 24 32"><path d="M6 14V8q0-6 6-6t6 6v6" fill="none" stroke="#9b9b9b" stroke-width="3" /><rect x="1" y="13" width="22" height="17" rx="2" fill="#9bdc74" stroke="#5fa63d" stroke-width="2" /></svg>
        <input type="text" value={url} aria-label="Address" />
        <svg width="32" height="32" viewBox="0 0 32 32"><circle cx="13" cy="13" r="11" fill="none" stroke="#8d8d8d" stroke-width="3" /><path d="M8 13h10M21 21L30 30" stroke="#8d8d8d" stroke-width="4" /></svg>
        <svg width="36" height="34" viewBox="0 0 36 34"><path d="M18 2L22 13H34L24 20L28 32L18 25L8 32L12 20L2 13H14z" fill="#fff" stroke="#8d8d8d" stroke-width="2" /></svg>
      </label>
      <svg width="38" height="38" viewBox="0 0 38 38"><circle cx="19" cy="19" r="19" fill="#7fc0e8" /><path d="M9 9h7M12 9L17 29Q26 20 27 12Q27 8 23 9" fill="none" stroke="#fff" stroke-width="4" /></svg>
      <button class="burger" aria-label="Menu"><svg width="30" height="26" viewBox="0 0 30 26"><path d="M2 3h26M2 13h26M2 23h26" stroke="#555" stroke-width="6" stroke-linecap="round" /></svg></button>
    </div>

    <div class="viewport">
      <div class="page">
        <nav class="heroku">
          <a href="#addons">Heroku Add-ons</a>
          <div class="crumbs">
            <a class="on" href="#app">megaurl</a><svg class="arrow" width="26" height="14" viewBox="0 0 26 14"><path d="M0 7h24M18 2l6 5l-6 5" fill="none" stroke="#a5a6b8" stroke-width="2" /></svg>
            <a href="#resources">Resources</a><a href="#activity">Activity</a><a href="#collaborators">Collaborators</a><a href="#settings">Settings</a>
          </div>
          <div class="crumbs last">
            <a class="on" href="#traceview">traceview</a><svg class="arrow" width="26" height="14" viewBox="0 0 26 14"><path d="M0 7h24M18 2l6 5l-6 5" fill="none" stroke="#a5a6b8" stroke-width="2" /></svg>
            <a href="#docs">Docs</a>
          </div>
        </nav>

        <div class="body">
          <aside>
            <svg class="logo" width="68" height="38" viewBox="0 0 68 38" aria-hidden="true">
              <path d="M9 0H22V16L9 8z" fill="#a5bf4b" /><path d="M46 0H58V8L46 16z" fill="#d63a6c" /><path d="M21 0H46V11L33 22L21 11z" fill="#d9713a" /><path d="M21 0H46L33 8z" fill="#f28b1d" />
              <path d="M21 13L33 22L46 13V28L33 37L21 28z" fill="#55c4d4" />
              <path d="M8 13L16 17V27L8 31L0 27V17z" fill="#e5245e" /><path d="M8 22L16 17V27L8 31z" fill="#a82a58" />
              <path d="M59 13L67 17V27L59 31L51 27V17z" fill="#a9bf3a" /><path d="M59 22L67 17V27L59 31z" fill="#86a050" />
            </svg>
            <a class="side" href="#enduser">
              <svg width="66" height="60" viewBox="0 0 66 60"><path d="M55 20A26 26 0 1 0 55 40" fill="none" stroke="#999" stroke-width="6" /><path d="M45 24h19l-9 12z" fill="#999" /><ellipse cx="30" cy="23" rx="6" ry="6" fill="#999" /><path d="M19 42V36q0-5 6-5l5 4l5-4q6 0 6 5v6z" fill="#999" /></svg>
              <span>end<br />user</span>
            </a>
            <a class="side current" href="#appserver">
              <svg width="66" height="60" viewBox="0 0 66 60"><path d="M55 20A26 26 0 1 0 55 40" fill="none" stroke="#319900" stroke-width="6" /><path d="M45 24h19l-9 12z" fill="#319900" /><path d="M30 19L42 24V36L30 41L18 36V24zM18 24L30 30L42 24M30 30V41" fill="none" stroke="#319900" stroke-width="2" /></svg>
              <span>app<br />server</span>
            </a>
            <a class="side" href="#errors">
              <svg width="66" height="60" viewBox="0 0 66 60"><circle cx="30" cy="30" r="26" fill="none" stroke="#999" stroke-width="5" /><path d="M30 12v24M30 41v7" stroke="#999" stroke-width="9" /></svg>
              <span><b>0</b><br />errors</span>
            </a>
          </aside>

          <main>
            <section class="timeline">
              <div class="spark">
                <svg class="plot" viewBox="0 0 1728 54" preserveAspectRatio="none">
                  <path d={`${latencyLine} V54 H488z`} fill="#badff0" />
                  <path d="M98 48h28v6h-28zM265 37h28v17h-28zM377 45L432 36V54H377z" fill="#badff0" />
                  <path d="M98 48h28M265 36h28M377 45L432 36" stroke="#37a2d3" stroke-width="4" />
                  <path d={latencyLine} fill="none" stroke="#37a2d3" stroke-width="3" />
                </svg>
                <div class="selected"></div>
                <button class="now" aria-label="Jump to now"><svg width="28" height="36" viewBox="0 0 28 36"><path d="M3 2L12 18L3 34" fill="none" stroke="#319900" stroke-width="3" /><path d="M24 2V34" stroke="#319900" stroke-width="4" /></svg></button>
              </div>
              <div class="scale">
                <div class="range"></div>
                {#each timeTicks as t}
                  <span class="tick" style:left={`${t.left}%`}>{t.label}</span>
                {/each}
                <button class="grip" aria-label="Move window"><i></i><i></i></button>
                <div class="handle start">
                  <button aria-label="Pick start">{@render calendarIcon()}</button><button class="time">3:25 PM <svg width="10" height="16" viewBox="0 0 10 16"><path d="M1 1L9 8L1 15z" fill="#fff" /></svg></button>
                </div>
                <div class="handle end">
                  <button class="time"><svg width="10" height="16" viewBox="0 0 10 16"><path d="M9 1L1 8L9 15z" fill="#fff" /></svg> 4:25 PM</button><button aria-label="Pick end">{@render calendarIcon()}</button>
                </div>
              </div>
            </section>

            <section class="stats">
              <div class="stat"><p class="num"><strong>11</strong><small>ms</small></p><p>avg. server latency</p></div>
              <div class="stat"><p class="num">{@render callsIcon()}<strong>421</strong></p><p>calls in time window</p></div>
              <div class="stat"><p class="num"><svg class="calls-icon" viewBox="0 0 32 34"><circle cx="16" cy="17" r="15" fill="none" stroke="#a5a5a5" stroke-width="2" /><path d="M16 7v12M16 22v4" stroke="#a5a5a5" stroke-width="5" /></svg><strong>0</strong></p><p>traces with errors</p></div>
            </section>

            <div class="switch">
              <button class="vis">
                <svg width="30" height="28" viewBox="0 0 30 28"><path d="M1 28V22L5 19V28zM7 28V20L11 24V28zM13 28V24L17 18V28zM19 28V18L23 22V28zM25 28V16L29 12V28z" fill="#319900" /><path d="M1 18L6 14L12 18L17 10L22 15L29 5" fill="none" stroke="#319900" stroke-width="2" /><path d="M9 4h5v6l-5 3zM24 0h5v3l-5 6z" fill="#319900" /></svg>
                visualize
              </button>
              <button class="list">{@render callsIcon()}<span><b>421</b> calls</span></button>
            </div>

            <section class="panel">
              <div class="bar">
                <button class="ptab">
                  <svg width="34" height="34" viewBox="0 0 34 34"><path d="M1 18V12L14 2L22 9L33 2V17L22 18L13 15zM1 24L13 19L22 22L33 21V32H1z" fill="#999" /></svg>layer breakdown
                </button>
                <button class="ptab on">
                  <svg width="34" height="34" viewBox="0 0 34 34"><path d="M1 4h32M1 16h32M1 28h32" stroke="#319900" stroke-width="7" stroke-dasharray="9 2" /></svg>request heatmap
                </button>
                <div class="tools">
                  <button class="sq" aria-label="Refresh"><svg width="24" height="28" viewBox="0 0 24 28"><path d="M14 6H12A9 9 0 1 0 21 15" fill="none" stroke="#999" stroke-width="4" /><path d="M11 0L19 6L11 12z" fill="#999" /></svg></button>
                  <button class="sec"><svg width="26" height="28" viewBox="0 0 26 28"><rect x="1" y="1" width="24" height="26" fill="none" stroke="#999" stroke-width="2" /><path d="M13 1v8M13 27v-8" stroke="#999" stroke-width="4" /><path d="M7 7h12l-6 6zM7 21h12l-6-6z" fill="#999" /></svg>0.0 - 1.3 sec</button>
                  <button class="sq" aria-label="Latency line"><svg width="28" height="28" viewBox="0 0 28 28"><path d="M0 16H2L5 12L8 19L12 3L16 25L20 11L23 16H28" fill="none" stroke="#999" stroke-width="2" /></svg></button>
                  <button class="sq">avg</button>
                  <button class="sq ann" aria-label="Annotations"><svg width="28" height="28" viewBox="0 0 28 28"><path d="M7 1H27V20L17 28L7 20z" fill="#319900" /><path d="M11 6h12M11 12h12M11 18h12" stroke="#fff" stroke-width="3" /><path d="M4 2V20L9 27M1 3V21L6 28" fill="none" stroke="#319900" stroke-width="2" /></svg></button>
                </div>
              </div>

              <div class="heat">
                <div class="yaxis">
                  {#each latencyTicks as t}<span>{t}<i></i></span>{/each}
                </div>
                <div class="cells">
                  {#each outliers as o}
                    <i class="cell" style:left={`${o.i / 1.2}%`} style:bottom={`${2 + o.row * 12}px`} style:background={shades[o.n ?? 1]}></i>
                  {/each}
                  <div class="band">
                    {#each band as n}<i style:background={n ? shades[n] : '#fff'}></i>{/each}
                  </div>
                  <svg class="note" width="24" height="32" viewBox="0 0 24 32"><path d="M0 2q0-2 2-2h20q2 0 2 2v19L12 32L0 21z" fill="#66b541" /><path d="M4 4h16M4 11h16M4 18h16" stroke="#fff" stroke-width="4" /></svg>
                  <div class="tooltip" role="tooltip">view/hide annotation</div>
                </div>
              </div>
              <div class="xaxis">
                <div class="hours">
                  {#each hourTicks as t, i}<span style:left={`${i / 0.12}%`}>{t} PM</span>{/each}
                </div>
              </div>
              <div class="volume">
                <p>Call<br />Volume<br />( 0 - 7 )</p>
                <div class="bars">
                  {#each counts as n}<i style:height={`${n * 13}%`}></i>{/each}
                </div>
              </div>
            </section>

            <section class="density">
              <p>trace density</p>
              <ul>
                {#each legend as n}<li style:border-color={shades[n]}>{n} calls</li>{/each}
              </ul>
            </section>

            <section class="details">
              <p class="window-range">[ 03:25 PM - 04:25 PM ]</p>
              <div class="cols">
                <div class="urls">
                  <div class="head">
                    <h2><svg width="18" height="10" viewBox="0 0 18 10"><path d="M0 0h18L9 10z" fill="#444" /></svg>Top URLs</h2>
                    <label>sort by
                      <span class="pick"><select><option>Freq x Avg. Duration</option></select><svg width="18" height="10" viewBox="0 0 18 10"><path d="M0 0h18L9 10z" fill="#999" /></svg></span>
                    </label>
                  </div>
                  <div class="rows"><i></i><i></i></div>
                </div>
                <div class="codes">
                  <h2><svg width="18" height="10" viewBox="0 0 18 10"><path d="M0 0h18L9 10z" fill="#444" /></svg>HTTP Status Codes [2]</h2>
                </div>
              </div>
            </section>
          </main>
        </div>
      </div>
      <div class="scroll"><i></i></div>
    </div>
    <div class="hoverlink">{url}</div>
  </section>

  <footer class="dock">
    <svg class="shelf" viewBox="0 0 2290 102" preserveAspectRatio="none" aria-hidden="true">
      <defs><linearGradient id="shelf" x2="0" y2="1"><stop offset="0" stop-color="#a3a5a6" /><stop offset="1" stop-color="#e2e4e5" /></linearGradient></defs>
      <path d="M66 0H2226Q2236 0 2239 8L2290 92V102H0V92L54 8Q58 0 66 0z" fill="url(#shelf)" />
      <path d="M0 93H2290V102H0z" fill="#a2a2a2" /><path d="M0 93H2290" stroke="#fff" stroke-width="2" />
    </svg>
    <div class="apps">
      {#each dockApps as app}
        {#if app.id === 'sep'}
          <svg class="sep" viewBox="0 0 66 160" aria-hidden="true"><path d="M18 66L46 142" stroke="#8f9293" stroke-width="3" /></svg>
        {:else}
          <button class="app" class:on={app.on} aria-label={app.id}>{@render dockIcon(app.id)}</button>
        {/if}
      {/each}
    </div>
  </footer>
</div>

<style>
  :global(body) { margin: 0; }
  :global(*) { box-sizing: border-box; }
  .desktop { height: 100vh; display: flex; flex-direction: column; overflow: hidden; background: #222; font-family: "Liberation Sans", Arial, sans-serif; color: #444; }
  button { font: inherit; color: inherit; background: none; border: 0; padding: 0; margin: 0; }
  svg { display: block; flex: none; }
  a { color: inherit; text-decoration: none; }
  p, h2, ul { margin: 0; padding: 0; font-weight: normal; list-style: none; }
  .defs { position: absolute; }

  .menubar { height: 44px; flex: none; display: flex; align-items: center; padding: 0 40px 0 38px; background: linear-gradient(#fafafa, #e0e0e0 8%, #adadad); border-bottom: 1px solid #333; font: 28px "Noto Sans", sans-serif; color: #000; }
  .apple { margin-right: 39px; }
  .menus { display: flex; gap: 38px; flex: 1; }
  .strong { font-weight: bold; }
  .status { display: flex; align-items: center; gap: 26px; }
  .volume-icon { margin-left: -6px; }
  .clock { font-size: 29px; }
  .user { font-weight: 600; color: #222; margin: 0 28px 0 10px; }
  .arch { margin-right: -8px; }

  .window { flex: 1; min-height: 0; display: flex; flex-direction: column; position: relative; background: #e6e6e6; border-radius: 8px 8px 0 0; overflow: hidden; }
  .tabstrip { height: 72px; flex: none; display: flex; align-items: flex-end; background: linear-gradient(#e8e8e8, #c9c9c9); padding-left: 24px; border-bottom: 2px solid #999; font: 22px "Noto Sans", sans-serif; color: #000; position: relative; }
  .lights { display: flex; gap: 16px; width: 124px; padding-bottom: 22px; }
  .lights i { width: 24px; height: 24px; border-radius: 50%; border: 1px solid #777; }
  .red { background: radial-gradient(at 50% 80%, #ff8d88, #e0302c); }
  .amber { background: radial-gradient(at 50% 80%, #ffe28a, #e59a28); }
  .green { background: radial-gradient(at 50% 80%, #c8f2a8, #62b03e); }
  .minis, .tabs { display: flex; align-items: flex-end; }
  .minis { margin-right: 4px; }
  .tab { position: relative; height: 49px; display: flex; align-items: center; flex: none; }
  .mini { width: 78px; padding-left: 34px; }
  .big { width: 244px; padding: 0 4px 0 30px; }
  .shape { position: absolute; left: 0; top: 0; height: 100%; }
  .mini .shape { width: 98px; }
  .big .shape { width: 268px; }
  .active { height: 51px; margin-bottom: -2px; }
  .fav { width: 32px; height: 32px; position: relative; }
  .title { position: relative; flex: 1; min-width: 0; white-space: nowrap; text-align: left; padding-left: 4px; -webkit-mask-image: linear-gradient(to right, #000 68%, transparent); mask-image: linear-gradient(to right, #000 68%, transparent); }
  .close { position: relative; width: 24px; display: flex; justify-content: flex-end; padding-right: 4px; }
  .newtab { margin: 0 0 7px 20px; }
  .full { position: absolute; right: 18px; top: 20px; }

  .toolbar { height: 72px; flex: none; display: flex; align-items: center; padding: 0 20px 0 18px; gap: 22px; background: linear-gradient(#ededed, #d9d9d9); border-bottom: 2px solid #888; }
  .omnibox { flex: 1; height: 54px; display: flex; align-items: center; gap: 12px; padding: 0 6px 0 14px; background: #fff; border: 2px solid #999; border-radius: 6px; }
  .omnibox input { flex: 1; min-width: 0; border: 0; padding: 0; margin-left: 4px; outline: 0; font: 30px "Noto Sans", sans-serif; color: transparent; background: linear-gradient(to right, #0a9c0a 70px, #666 70px 109px, #000 109px 610px, #666 610px); -webkit-background-clip: text; background-clip: text; }
  .burger { margin-left: 4px; }

  .viewport { flex: 1; min-height: 0; display: flex; }
  .page { flex: 1; min-width: 0; display: flex; flex-direction: column; overflow: hidden; }
  .scroll { width: 30px; flex: none; background: #fafafa; border-left: 1px solid #e2e2e2; padding: 97px 4px 0 7px; }
  .scroll i { display: block; height: 707px; border-radius: 9px; background: #c1c1c1; }
  .heroku { height: 58px; flex: none; display: flex; align-items: center; padding: 0 48px 3px 18px; background: #27294c; color: #a5a6b8; font-size: 27px; }
  .crumbs { display: flex; align-items: center; gap: 28px; margin-left: auto; }
  .crumbs .on { color: #fff; font-weight: bold; font-size: 25px; }
  .crumbs .arrow { margin: 0 -13px; }
  .crumbs.last { margin-left: 122px; }

  .body { flex: 1; min-height: 0; display: flex; background-color: #eeeff1;
    background-image:
      radial-gradient(circle at 70px 60px, #cacaca 1px, transparent 3px), radial-gradient(circle at 310px 160px, #cccccc 1px, transparent 3px),
      radial-gradient(circle at 250px 220px, #d0d0d0 1px, transparent 3px), radial-gradient(circle at 120px 320px, #c8c8c8 1px, transparent 3px),
      linear-gradient(to right, #eceded, #f1f2f3 20%, #eeeff1);
    background-size: 417px 379px, 533px 291px, 347px 463px, 611px 523px, 100% 100%; }
  aside { width: 288px; flex: none; background: rgba(0, 0, 0, 0.05); font-size: 21px; line-height: 24px; color: #666; }
  .logo { margin: 0 0 30px 102px; }
  .side { display: flex; align-items: center; gap: 15px; height: 60px; margin: 0 0 36px 45px; }
  .side.current { color: #319900; }
  .side b { color: #b8000e; font-size: 24px; }

  main { width: 60%; max-width: 1728px; flex: 1 1 auto; margin: 20px 0 0 418px; }
  .spark { position: relative; height: 54px; background: #fff; }
  .plot { width: 100%; height: 54px; }
  .selected { position: absolute; top: 0; bottom: 0; left: 48.45%; width: 48.35%; background: #d5eaca; mix-blend-mode: multiply; border: solid #37a0d0; border-width: 0 2px; }
  .now { position: absolute; right: 0; top: 0; bottom: 0; width: 54px; background: #b4d2a6; display: grid; place-items: center; }
  .scale { position: relative; height: 40px; font-size: 21px; color: #333; }
  .range { position: absolute; left: 48.5%; width: 48.26%; top: 4px; bottom: 0; background: #cad0dc; }
  .tick { position: absolute; top: 11px; transform: translateX(-50%); line-height: 24px; white-space: nowrap; }
  .tick::before { content: ""; position: absolute; left: 50%; top: -11px; width: 3px; height: 2px; background: #000; }
  .grip { position: absolute; left: 71.65%; top: 4px; bottom: 0; width: 35px; background: #47a4d4; display: flex; align-items: center; justify-content: center; gap: 4px; }
  .grip i { width: 3px; height: 20px; background: #fff; }
  .handle { position: absolute; top: 4px; bottom: 0; display: flex; gap: 2px; color: #fff; font-weight: bold; font-size: 21px; white-space: nowrap; }
  .handle button { background: #37a0d0; padding: 2px 6px 0; display: flex; align-items: center; gap: 8px; }
  .handle .time { padding: 2px 8px 0; }
  .start { right: 51.5%; }
  .end { left: 96.76%; }

  .stats { margin-top: 36px; padding: 12px; background: #e4e4e4; display: grid; grid-template-columns: repeat(3, 1fr); height: 128px; font-size: 22px; color: #999; text-align: center; }
  .stat { background: #fff; padding: 16px 2px 0 0; line-height: 42px; }
  .stat + .stat { border-left: 2px solid #ebebeb; }
  .num { display: flex; justify-content: center; align-items: center; gap: 14px; height: 40px; padding-right: 14px; color: #a5a5a5; }
  .num strong { font-size: 33px; color: #444; }
  .num small { font-size: 25px; color: #999; }
  .calls-icon { width: 32px; height: 34px; }

  .switch { display: flex; justify-content: center; margin-top: 26px; background: linear-gradient(#c8c9ca, #c8c9ca) 0 32px / 100% 2px no-repeat; font-size: 26px; }
  .switch button { height: 60px; width: 217px; border: 2px solid #c8c9ca; display: flex; align-items: center; justify-content: center; gap: 14px; background: #edeef0; color: #999; position: relative; }
  .switch .vis { color: #319900; background: linear-gradient(#cce1c4, #fff); padding-right: 6px; }
  .switch .list { border-left: 0; padding-right: 6px; }
  .vis::after { content: ""; position: absolute; left: 50%; bottom: -9px; width: 14px; height: 14px; margin-left: -7px; background: #fff; border: solid #c8c9ca; border-width: 0 2px 2px 0; transform: rotate(45deg); }

  .panel { margin-top: 36px; border: 2px solid #fff; background: #e4e4e4; }
  .bar { display: flex; align-items: center; height: 62px; border-bottom: 2px solid #fff; font-size: 23px; color: #666; }
  .ptab { height: 56px; display: flex; align-items: center; gap: 14px; padding: 0 19px 2px 6px; border-right: 2px solid #c8c9ca; background: linear-gradient(#fff, #dedede); }
  .ptab.on { color: #319900; background: linear-gradient(#cce1c4, #fff); padding-left: 7px; padding-right: 18px; margin-left: 2px; }
  .tools { margin-left: auto; display: flex; gap: 7px; padding-right: 10px; font-size: 20px; color: #999; }
  .tools button { height: 42px; border: 2px solid #c8c9ca; background: linear-gradient(#fdfdfd, #e0e0e0); display: flex; align-items: center; justify-content: center; gap: 6px; }
  .tools .sq { width: 44px; }
  .tools .sec { padding: 0 8px; }
  .tools .ann { border-color: #319900; background: #fff; }
  .heat { display: flex; height: 482px; }
  .yaxis { width: 108px; flex: none; display: flex; flex-direction: column; gap: 51px; padding-top: 28px; font-size: 19px; line-height: 22px; }
  .yaxis span { display: flex; justify-content: flex-end; align-items: center; gap: 7px; padding-right: 7px; }
  .yaxis i { width: 3px; height: 3px; background: #222; margin-top: 6px; }
  .cells { flex: 1; position: relative; background: #fff; }
  .cell { position: absolute; width: 14px; height: 12px; }
  .band { position: absolute; left: 0; right: 0; bottom: 2px; display: flex; height: 12px; }
  .band i { flex: 1; }
  .note { position: absolute; left: 58.8%; top: -6px; }
  .tooltip { position: absolute; left: 52.2%; top: -58px; height: 38px; line-height: 38px; padding: 0 13px; border-radius: 5px; background: #2b2b2b; color: #fff; font-size: 21px; font-weight: bold; white-space: nowrap; box-shadow: 0 4px 10px rgba(0, 0, 0, 0.4); }
  .tooltip::after { content: ""; position: absolute; left: 50%; top: 38px; margin-left: -8px; border: 8px solid transparent; border-top-color: #1a1a1a; }
  .xaxis { height: 26px; font-size: 19px; overflow: hidden; padding-left: 108px; }
  .hours { position: relative; height: 26px; }
  .hours span { position: absolute; top: 3px; line-height: 22px; transform: translateX(-50%); white-space: nowrap; }
  .hours span::before { content: ""; position: absolute; left: 50%; top: -3px; width: 3px; height: 2px; background: #000; }
  .volume { display: flex; height: 82px; border-top: 2px solid #fff; }
  .volume p { width: 108px; flex: none; padding: 10px 23px 0 0; text-align: right; font-size: 19px; line-height: 20px; }
  .bars { flex: 1; display: flex; align-items: flex-end; gap: 1px; background: #e0e8ed; border-bottom: 1px solid #cfdbe2; }
  .bars i { flex: 1; background: #c0cdd8; }

  .density { margin: 0 10px 0 8px; height: 104px; padding: 9px 18px; background: #d5dbe3; font-size: 19px; line-height: 22px; }
  .density ul { display: flex; gap: 48px; margin-top: 11px; }
  .density li { border-left: 6px solid; padding: 8px 0 8px 7px; }

  .details { margin: 54px 28px 0 26px; background: #fff; height: 200px; padding: 26px 28px 0 0; }
  .window-range { text-align: right; font-size: 23px; line-height: 28px; color: #666; padding-right: 3px; }
  .cols { display: flex; gap: 50px; margin-top: 26px; }
  .urls { flex: 1; padding-left: 34px; }
  .head { display: flex; justify-content: space-between; align-items: flex-start; padding-top: 4px; }
  h2 { display: flex; align-items: center; gap: 12px; font-size: 29px; line-height: 34px; }
  .head h2 { padding-top: 15px; }
  .head label { display: flex; align-items: center; gap: 10px; font-size: 20px; color: #777; }
  .pick { position: relative; display: flex; }
  .pick svg { position: absolute; right: 11px; top: 13px; }
  select { appearance: none; width: 258px; height: 42px; padding: 0 10px; border: 2px solid #c8c9ca; border-radius: 0; color: #444; font: 22px "Liberation Sans", Arial, sans-serif; background: linear-gradient(#c8c9ca, #c8c9ca) 216px 0 / 2px 100% no-repeat, linear-gradient(#fff, #dedede); }
  .rows { display: flex; gap: 2px; margin-top: 21px; border-top: 2px solid #c8c9ca; background: #c8c9ca; height: 20px; }
  .rows i { flex: 1 1 650px; background: linear-gradient(#fff, #f4f4f4); }
  .rows i + i { flex: 0 1 131px; }
  .codes { width: 648px; flex: none; height: 120px; padding: 37px 22px; background: #daecf4; }

  .hoverlink { position: absolute; left: 0; bottom: 0; width: 51%; height: 36px; line-height: 30px; padding: 0 0 0 8px; overflow: hidden; white-space: nowrap; background: #ececec; border: solid #b4b4b4; border-width: 3px 3px 3px 0; border-radius: 0 6px 0 0; font-family: "Noto Sans", sans-serif; font-size: 24px; color: #000; }

  .dock { height: 176px; flex: none; position: relative; display: flex; justify-content: center; padding: 16px 0 0 10px; background: linear-gradient(#161616, #333 35%, #5c5c5c); }
  .shelf { position: absolute; left: 10.25%; bottom: 0; width: 79.5%; height: 102px; }
  .apps { position: relative; display: flex; }
  .app { width: 132px; height: 160px; position: relative; display: block; }
  .app svg { width: 132px; height: 160px; }
  .sep { width: 66px; height: 160px; }
  .on.app::after { content: ""; position: absolute; left: 54px; bottom: 0; width: 24px; height: 7px; background: #f2fbff; box-shadow: 0 0 8px 3px #8fd0f5; }
</style>
